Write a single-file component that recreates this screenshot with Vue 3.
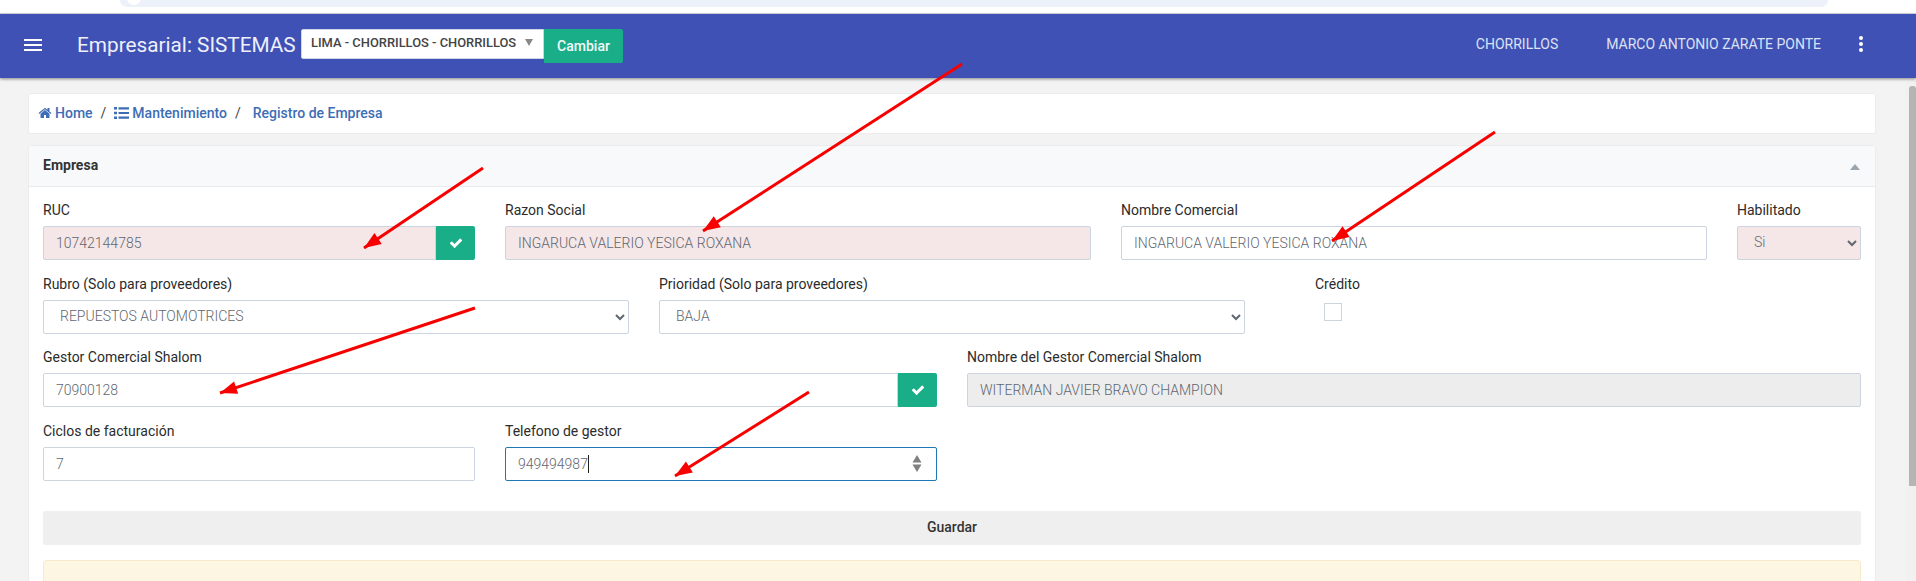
<script setup>
const arrows = [
  [483, 168, 364, 248],
  [962, 64, 703, 231],
  [1495, 132, 1332, 241],
  [475, 308, 220, 393],
  [809, 392, 675, 476],
]
function head(a) {
  const [x1, y1, x2, y2] = a
  const d = Math.hypot(x2 - x1, y2 - y1)
  const ux = (x2 - x1) / d, uy = (y2 - y1) / d
  const bx = x2 - ux * 17, by = y2 - uy * 17
  return `${x2},${y2} ${bx - uy * 6.5},${by + ux * 6.5} ${bx + uy * 6.5},${by - ux * 6.5}`
}
const checkPath = 'M1671 566q0 40-28 68l-724 724-136 136q-28 28-68 28t-68-28l-136-136-362-362q-28-28-28-68t28-68l136-136q28-28 68-28t68 28l294 295 656-657q28-28 68-28t68 28l136 136q28 28 28 68z'
</script>

<template>
  <div class="page">
    <div class="chrome"><div class="urlbar"><i class="urlicon"></i></div></div>
    <header class="navbar">
      <svg class="burger" width="18" height="12" viewBox="0 0 18 12"><path d="M0 0h18v2H0zM0 5h18v2H0zM0 10h18v2H0z" fill="#fff"/></svg>
      <div class="brand">Empresarial: SISTEMAS</div>
      <div class="sede"><span>LIMA - CHORRILLOS - CHORRILLOS</span><i class="caret-down"></i></div>
      <button class="cambiar">Cambiar</button>
      <div class="nav-right">
        <span>CHORRILLOS</span>
        <span>MARCO ANTONIO ZARATE PONTE</span>
        <svg class="kebab" width="4" height="16" viewBox="0 0 4 16"><circle cx="2" cy="2" r="2" fill="#fff"/><circle cx="2" cy="8" r="2" fill="#fff"/><circle cx="2" cy="14" r="2" fill="#fff"/></svg>
      </div>
    </header>
    <div class="body">
      <main class="content">
        <nav class="crumbs">
          <svg width="14" height="14" viewBox="0 0 1792 1792"><path fill="#3d6db5" d="M1472 992v480q0 26-19 45t-45 19h-384v-384h-256v384h-384q-26 0-45-19t-19-45v-480q0-1 .5-3t.5-3l575-474 575 474q1 2 1 6zm223-69l-62 74q-8 9-21 11h-3q-13 0-21-7l-692-577-692 577q-12 8-24 7-13-2-21-11l-62-74q-8-10-7-23.500t11-21.500l719-599q32-26 76-26t76 26l244 204v-195q0-14 9-23t23-9h192q14 0 23 9t9 23v408l219 182q10 8 11 21.500t-7 23.500z"/></svg>
          <a class="c-home">Home</a>
          <span class="sep">/</span>
          <svg width="15" height="12" viewBox="0 0 15 12"><path d="M0 0h3v2.600H0zM4.500 .2H15v2.200H4.500zM0 4.700h3v2.600H0zM4.500 4.900H15v2.200H4.500zM0 9.400h3V12H0zM4.500 9.600H15v2.200H4.500z" fill="#3d6db5"/></svg>
          <a class="c-mant">Mantenimiento</a>
          <span class="sep">/</span>
          <a class="c-reg">Registro de Empresa</a>
        </nav>
        <section class="card">
          <div class="card-head"><b>Empresa</b><i class="caret-up"></i></div>
          <div class="card-body">
            <div class="grid">
              <div class="field s3">
                <label>RUC</label>
                <div class="group">
                  <input class="ctl pink" value="10742144785" readonly />
                  <button class="ok"><svg width="14" height="14" viewBox="0 0 1792 1792"><path :d="checkPath" fill="#fff"/></svg></button>
                </div>
              </div>
              <div class="field s4">
                <label>Razon Social</label>
                <input class="ctl pink" value="INGARUCA VALERIO YESICA ROXANA" readonly />
              </div>
              <div class="field s4">
                <label>Nombre Comercial</label>
                <input class="ctl" value="INGARUCA VALERIO YESICA ROXANA" readonly />
              </div>
              <div class="field s1">
                <label>Habilitado</label>
                <select class="ctl pink sel"><option>Si</option></select>
              </div>

              <div class="field s4">
                <label>Rubro (Solo para proveedores)</label>
                <select class="ctl sel"><option>REPUESTOS AUTOMOTRICES</option></select>
              </div>
              <div class="field s4">
                <label>Prioridad (Solo para proveedores)</label>
                <select class="ctl sel"><option>BAJA</option></select>
              </div>
              <div class="field s1 credito">
                <label>Crédito</label>
                <span class="check"></span>
              </div>
              <div class="s3"></div>

              <div class="field s6">
                <label>Gestor Comercial Shalom</label>
                <div class="group">
                  <input class="ctl" value="70900128" readonly />
                  <button class="ok"><svg width="14" height="14" viewBox="0 0 1792 1792"><path :d="checkPath" fill="#fff"/></svg></button>
                </div>
              </div>
              <div class="field s6">
                <label>Nombre del Gestor Comercial Shalom</label>
                <input class="ctl gray" value="WITERMAN JAVIER BRAVO CHAMPION" readonly />
              </div>

              <div class="field s3">
                <label>Ciclos de facturación</label>
                <input class="ctl" value="7" readonly />
              </div>
              <div class="field s3">
                <label>Telefono de gestor</label>
                <div class="ctl focus">
                  <span>949494987</span><i class="cursor"></i>
                  <svg class="spin" width="10" height="17" viewBox="0 0 10 17"><path d="M5 0 9.500 7.500H.500zM.500 9.500h9L5 17z" fill="#808080"/></svg>
                </div>
              </div>
            </div>
            <button class="guardar">Guardar</button>
            <div class="alert"></div>
          </div>
        </section>
      </main>
      <div class="scroll"><div class="thumb"></div></div>
    </div>
    <svg class="marks" width="1916" height="581" viewBox="0 0 1916 581">
      <g v-for="(a, i) in arrows" :key="i">
        <line :x1="a[0]" :y1="a[1]" :x2="a[2]" :y2="a[3]" stroke="#f80000" stroke-width="3" />
        <polygon :points="head(a)" fill="#f80000" />
      </g>
    </svg>
  </div>
</template>

<style>
html, body { margin: 0; height: 100%; overflow: hidden; }
</style>

<style scoped>
.page {
  position: relative;
  width: 1916px;
  height: 581px;
  overflow: hidden;
  background: #f3f3f3;
  font-family: Roboto, "Liberation Sans", sans-serif;
  font-size: 14px;
  color: #212529;
  display: flex;
  flex-direction: column;
}
.chrome {
  height: 13px;
  flex: none;
  background: #fff;
  border-bottom: 1px solid #dadce0;
}
.urlbar {
  position: relative;
  overflow: hidden;
  margin-left: 120px;
  width: 1708px;
  height: 7px;
  background: #edf1fa;
  border-radius: 0 0 10px 10px;
}
.urlicon {
  position: absolute;
  left: 7px;
  top: -9px;
  width: 14px;
  height: 14px;
  border-radius: 50%;
  background: #fff;
}
.navbar {
  flex: none;
  height: 64px;
  background: #3f51b5;
  display: flex;
  align-items: center;
  padding-left: 24px;
  box-shadow: 0 1px 3px rgba(0, 0, 0, .45);
  position: relative;
  z-index: 2;
}
.burger { flex: none; margin-top: -2px; }
.brand {
  margin-left: 35px;
  width: 224px;
  font-size: 20.75px;
  color: #eef0fa;
  white-space: nowrap;
  margin-top: -2px;
}
.sede {
  box-sizing: border-box;
  width: 243px;
  height: 30px;
  background: #fff;
  border: 1px solid #d0d4e4;
  border-radius: 2px 0 0 2px;
  display: flex;
  align-items: center;
  padding-left: 9px;
  font-size: 12.9px;
  font-weight: 500;
  color: #444;
  margin-top: -4px;
  padding-bottom: 4px;
  white-space: nowrap;
}
.caret-down {
  margin-left: 9px;
  width: 0; height: 0;
  border-left: 4px solid transparent;
  border-right: 4px solid transparent;
  border-top: 7px solid #888;
}
.cambiar {
  width: 79px;
  height: 34px;
  border: 0;
  border-radius: 0 2px 2px 0;
  background: #1aae88;
  color: #f1fbf8;
  font: 500 14px Roboto, sans-serif;
  margin-top: 0;
  padding: 0;
}
.nav-right {
  margin-left: auto;
  display: flex;
  align-items: center;
  font-size: 14px;
  font-weight: 400;
  color: #dde1f3;
  margin-top: -4px;
}
.nav-right span:first-child { margin-right: 48px; }
.kebab { margin: 0 53px 0 38px; }
.body {
  flex: 1;
  display: flex;
  min-height: 0;
}
.content {
  flex: 1;
  min-width: 0;
  padding: 15px 30px 0 28px;
}
.scroll {
  width: 10px;
  flex: none;
  background: #f1f1f1;
  padding-top: 8px;
  box-sizing: border-box;
}
.thumb {
  margin-left: 3px;
  height: 400px;
  background: #b5b5b5;
  border-radius: 3px 3px 0 0;
}
.crumbs {
  box-sizing: border-box;
  height: 41px;
  background: #fff;
  border: 1px solid #ececec;
  border-radius: 3px;
  display: flex;
  align-items: center;
  padding-left: 9px;
  padding-bottom: 2px;
  color: #3d6db5;
  font-weight: 500;
  white-space: nowrap;
}
.crumbs a { color: #3d6db5; }
.c-home { margin-left: 3px; }
.sep { margin: 0 8px; color: #444; font-weight: 400; }
.c-mant { margin-left: 3px; }
.c-reg { margin-left: 4px; }
.card {
  margin-top: 11px;
  background: #fff;
  border: 1px solid #ececec;
  border-radius: 3px 3px 0 0;
  height: 500px;
}
.card-head {
  box-sizing: border-box;
  height: 41px;
  background: #f8f9fb;
  border-bottom: 1px solid #e8eaec;
  display: flex;
  align-items: center;
  justify-content: space-between;
  padding: 0 14px 2px;
}
.card-head b { font-weight: 700; font-size: 14px; color: #333; }
.caret-up {
  margin-right: 1px;
  margin-top: 3px;
  width: 0; height: 0;
  border-left: 5px solid transparent;
  border-right: 5px solid transparent;
  border-bottom: 6px solid #9aa5ae;
}
.card-body { padding: 14px 14px 0; }
.grid {
  display: grid;
  grid-template-columns: repeat(12, 124px);
  column-gap: 30px;
  row-gap: 14.67px;
}
.s1 { grid-column: span 1; }
.s3 { grid-column: span 3; }
.s4 { grid-column: span 4; }
.s6 { grid-column: span 6; }
.field { display: flex; flex-direction: column; min-width: 0; }
.field label {
  height: 25px;
  line-height: 19px;
  font-size: 14px;
  color: #2b2b2b;
}
.ctl {
  box-sizing: border-box;
  width: 100%;
  height: 34px;
  border: 1px solid #ccd5df;
  border-radius: 2px;
  background: #fff;
  padding: 0 12px;
  font: 300 14px Roboto, sans-serif;
  color: #5f6770;
  outline: 0;
  display: block;
}
.pink { background: #f5e6e7; }
.gray { background: #ededed; }
.sel { padding: 0 12px 2px; }
.group { display: flex; }
.group .ctl { flex: 1; min-width: 0; border-radius: 2px 0 0 2px; }
.ok {
  flex: none;
  width: 39px;
  height: 34px;
  border: 0;
  padding: 0;
  background: #1aae88;
  border-radius: 0 2px 2px 0;
  display: flex;
  align-items: center;
  justify-content: center;
}
.credito label { white-space: nowrap; padding-left: 40px; }
.check {
  box-sizing: border-box;
  width: 18px;
  height: 18px;
  border: 1px solid #ccd5df;
  margin: 3px 0 0 49px;
  background: #fff;
}
.focus {
  border-color: #1f78b4;
  display: flex;
  align-items: center;
  position: relative;
}
.cursor { width: 1px; height: 18px; background: #222; margin-left: 0; }
.spin { position: absolute; right: 14px; top: 7px; }
.guardar {
  display: block;
  width: 100%;
  height: 34px;
  margin-top: 30px;
  border: 0;
  border-radius: 2px;
  background: #efefef;
  color: #333;
  font: 500 14px Roboto, sans-serif;
  padding: 0 0 2px;
}
.alert {
  margin-top: 15px;
  height: 80px;
  background: #fcf6e3;
  border: 1px solid #f8ebcd;
  border-radius: 3px;
}
.marks { position: absolute; left: 0; top: 0; pointer-events: none; z-index: 3; }
</style>
